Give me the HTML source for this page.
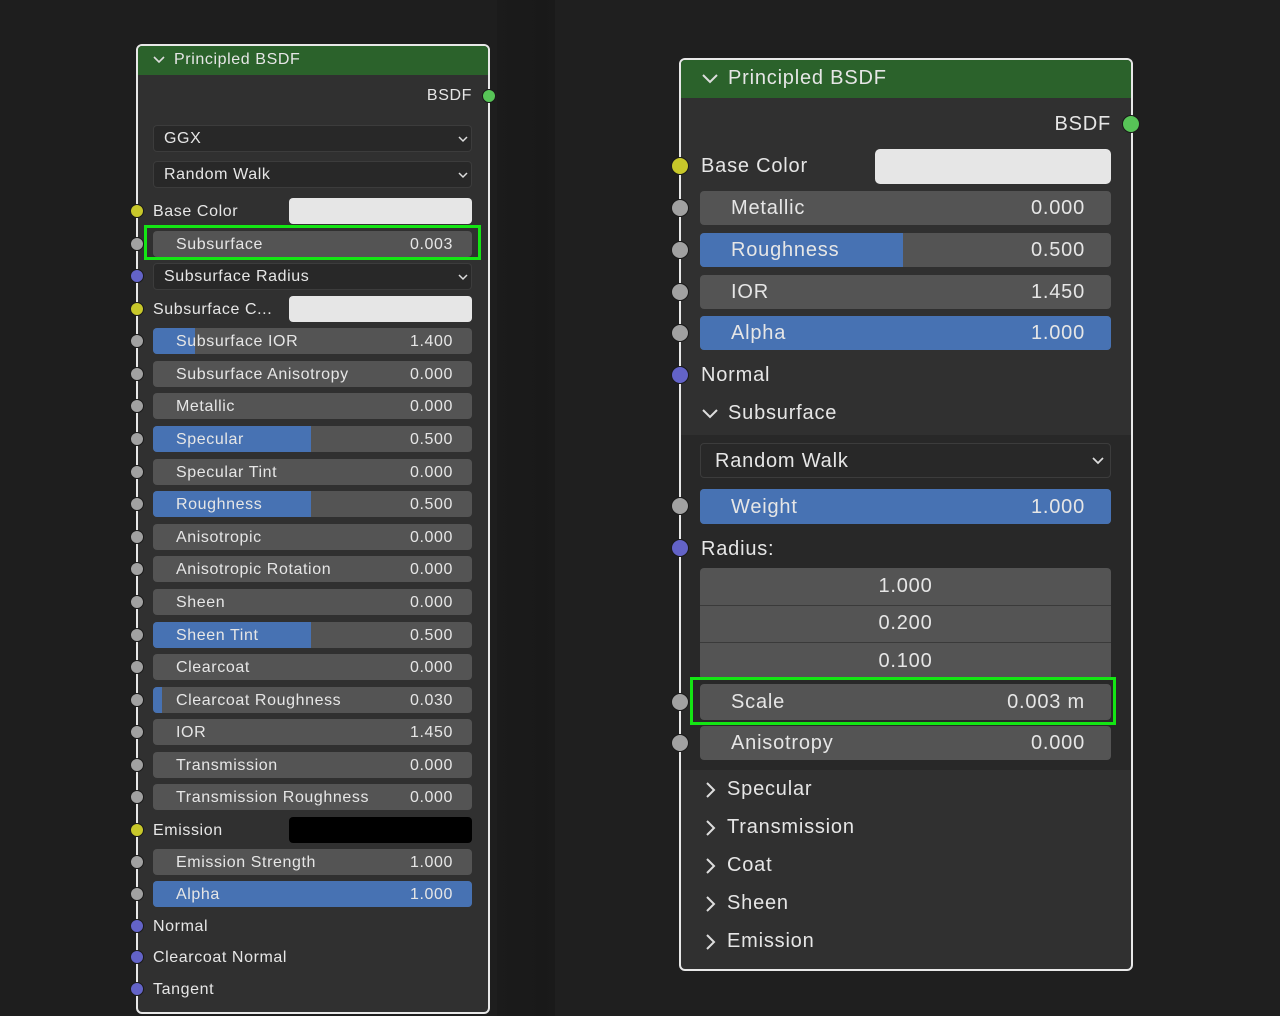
<!DOCTYPE html>
<html><head><meta charset="utf-8"><style>
*{box-sizing:border-box;margin:0;padding:0}
body{width:1280px;height:1016px;overflow:hidden;background:#1e1e1e;font-family:"Liberation Sans","DejaVu Sans",sans-serif;color:#e6e6e6;position:relative}
.a{position:absolute}
.node{position:absolute;background:#303030;border:2px solid #e8e8e8;border-radius:6px;overflow:hidden}
.hd{position:absolute;left:0;right:0;top:0;background:#2b622b}
.s{position:absolute;border-radius:50%;border:1.5px solid #1a1a1a}
.g{background:#a1a1a1}.y{background:#c7c72a}.p{background:#6363c7}.gr{background:#57c457}
.w{position:absolute;background:#545454;border-radius:4px;overflow:hidden}
.w .f{position:absolute;left:0;top:0;bottom:0;background:#4772b3}
.w .l,.w .v{position:absolute;top:1px;bottom:0;display:flex;align-items:center}
.dd{position:absolute;background:#282828;border:1px solid #3c3c3c;border-radius:4px}
.t{position:absolute;display:flex;align-items:center;padding-top:1px}
.hl{position:absolute;border:3px solid #14e614}
.L{letter-spacing:0.6px}
.R{letter-spacing:0.8px}
</style></head><body>
<div class="a" style="left:497px;top:0;width:58px;height:1016px;background:linear-gradient(90deg,#1b1b1b,#191919 80%,#1a1a1a)"></div>
<div class="a" style="left:555px;top:0;width:725px;height:1016px;background:#1f1f1f"></div>

<div class="L">
<!-- LEFT NODE -->
<div class="node" style="left:136px;top:44px;width:354px;height:970px;font-size:16px">
 <div class="hd" style="height:29px"></div>
</div>
<div class="t" style="left:152px;top:45px;height:28px;font-size:16px"><svg width="14" height="10" viewBox="0 0 14 10"><path d="M2 2l5 5 5-5" stroke="#ddd" stroke-width="1.6" fill="none"/></svg><span style="margin-left:8px">Principled BSDF</span></div>
<div class="t" style="left:400px;top:84px;height:22px;width:72px;justify-content:flex-end;font-size:16px">BSDF</div>
<div class="s gr" style="left:482px;top:89px;width:14px;height:14px"></div>

<div class="dd" style="left:153px;top:125px;width:319px;height:27px"></div>
<div class="t" style="left:164px;top:125px;height:27px;font-size:16px">GGX</div>
<div class="dd" style="left:153px;top:161px;width:319px;height:27px"></div>
<div class="t" style="left:164px;top:161px;height:27px;font-size:16px">Random Walk</div>
<div class="dd" style="left:153px;top:263px;width:319px;height:27px"></div>
<div class="t" style="left:164px;top:263px;height:27px;font-size:16px">Subsurface Radius</div>
<svg class="a" style="left:457px;top:134px" width="12" height="10"><path d="M2 3l4 4 4-4" stroke="#ddd" stroke-width="1.5" fill="none"/></svg>
<svg class="a" style="left:457px;top:170px" width="12" height="10"><path d="M2 3l4 4 4-4" stroke="#ddd" stroke-width="1.5" fill="none"/></svg>
<svg class="a" style="left:457px;top:272px" width="12" height="10"><path d="M2 3l4 4 4-4" stroke="#ddd" stroke-width="1.5" fill="none"/></svg>

<div class="t" style="left:153px;top:198px;height:26px;font-size:16px">Base Color</div>
<div class="a" style="left:289px;top:198px;width:183px;height:26px;background:#e6e6e6;border-radius:4px"></div>
<div class="t" style="left:153px;top:296px;height:26px;font-size:16px">Subsurface C...</div>
<div class="a" style="left:289px;top:296px;width:183px;height:26px;background:#e6e6e6;border-radius:4px"></div>
<div class="t" style="left:153px;top:817px;height:26px;font-size:16px">Emission</div>
<div class="a" style="left:289px;top:817px;width:183px;height:26px;background:#000;border-radius:4px"></div>
<div class="t" style="left:153px;top:913px;height:26px;font-size:16px">Normal</div>
<div class="t" style="left:153px;top:944px;height:26px;font-size:16px">Clearcoat Normal</div>
<div class="t" style="left:153px;top:976px;height:26px;font-size:16px">Tangent</div>

<div class="w" style="left:153px;top:231px;width:319px;height:26px;font-size:16px"><div class="l" style="left:23px">Subsurface</div><div class="v" style="right:19px">0.003</div></div>
<div class="w" style="left:153px;top:328px;width:319px;height:26px;font-size:16px"><div class="f" style="width:42px"></div><div class="l" style="left:23px">Subsurface IOR</div><div class="v" style="right:19px">1.400</div></div>
<div class="w" style="left:153px;top:361px;width:319px;height:26px;font-size:16px"><div class="l" style="left:23px">Subsurface Anisotropy</div><div class="v" style="right:19px">0.000</div></div>
<div class="w" style="left:153px;top:393px;width:319px;height:26px;font-size:16px"><div class="l" style="left:23px">Metallic</div><div class="v" style="right:19px">0.000</div></div>
<div class="w" style="left:153px;top:426px;width:319px;height:26px;font-size:16px"><div class="f" style="width:158px"></div><div class="l" style="left:23px">Specular</div><div class="v" style="right:19px">0.500</div></div>
<div class="w" style="left:153px;top:459px;width:319px;height:26px;font-size:16px"><div class="l" style="left:23px">Specular Tint</div><div class="v" style="right:19px">0.000</div></div>
<div class="w" style="left:153px;top:491px;width:319px;height:26px;font-size:16px"><div class="f" style="width:158px"></div><div class="l" style="left:23px">Roughness</div><div class="v" style="right:19px">0.500</div></div>
<div class="w" style="left:153px;top:524px;width:319px;height:26px;font-size:16px"><div class="l" style="left:23px">Anisotropic</div><div class="v" style="right:19px">0.000</div></div>
<div class="w" style="left:153px;top:556px;width:319px;height:26px;font-size:16px"><div class="l" style="left:23px">Anisotropic Rotation</div><div class="v" style="right:19px">0.000</div></div>
<div class="w" style="left:153px;top:589px;width:319px;height:26px;font-size:16px"><div class="l" style="left:23px">Sheen</div><div class="v" style="right:19px">0.000</div></div>
<div class="w" style="left:153px;top:622px;width:319px;height:26px;font-size:16px"><div class="f" style="width:158px"></div><div class="l" style="left:23px">Sheen Tint</div><div class="v" style="right:19px">0.500</div></div>
<div class="w" style="left:153px;top:654px;width:319px;height:26px;font-size:16px"><div class="l" style="left:23px">Clearcoat</div><div class="v" style="right:19px">0.000</div></div>
<div class="w" style="left:153px;top:687px;width:319px;height:26px;font-size:16px"><div class="f" style="width:9px"></div><div class="l" style="left:23px">Clearcoat Roughness</div><div class="v" style="right:19px">0.030</div></div>
<div class="w" style="left:153px;top:719px;width:319px;height:26px;font-size:16px"><div class="l" style="left:23px">IOR</div><div class="v" style="right:19px">1.450</div></div>
<div class="w" style="left:153px;top:752px;width:319px;height:26px;font-size:16px"><div class="l" style="left:23px">Transmission</div><div class="v" style="right:19px">0.000</div></div>
<div class="w" style="left:153px;top:784px;width:319px;height:26px;font-size:16px"><div class="l" style="left:23px">Transmission Roughness</div><div class="v" style="right:19px">0.000</div></div>
<div class="w" style="left:153px;top:849px;width:319px;height:26px;font-size:16px"><div class="l" style="left:23px">Emission Strength</div><div class="v" style="right:19px">1.000</div></div>
<div class="w" style="left:153px;top:881px;width:319px;height:26px;font-size:16px"><div class="f" style="width:319px"></div><div class="l" style="left:23px">Alpha</div><div class="v" style="right:19px">1.000</div></div>
<div class="hl" style="left:144px;top:225px;width:337px;height:35px"></div>
</div>

<div class="s y" style="left:130px;top:204px;width:14px;height:14px"></div>
<div class="s g" style="left:130px;top:237px;width:14px;height:14px"></div>
<div class="s p" style="left:130px;top:269px;width:14px;height:14px"></div>
<div class="s y" style="left:130px;top:302px;width:14px;height:14px"></div>
<div class="s g" style="left:130px;top:334px;width:14px;height:14px"></div>
<div class="s g" style="left:130px;top:367px;width:14px;height:14px"></div>
<div class="s g" style="left:130px;top:399px;width:14px;height:14px"></div>
<div class="s g" style="left:130px;top:432px;width:14px;height:14px"></div>
<div class="s g" style="left:130px;top:465px;width:14px;height:14px"></div>
<div class="s g" style="left:130px;top:497px;width:14px;height:14px"></div>
<div class="s g" style="left:130px;top:530px;width:14px;height:14px"></div>
<div class="s g" style="left:130px;top:562px;width:14px;height:14px"></div>
<div class="s g" style="left:130px;top:595px;width:14px;height:14px"></div>
<div class="s g" style="left:130px;top:628px;width:14px;height:14px"></div>
<div class="s g" style="left:130px;top:660px;width:14px;height:14px"></div>
<div class="s g" style="left:130px;top:693px;width:14px;height:14px"></div>
<div class="s g" style="left:130px;top:725px;width:14px;height:14px"></div>
<div class="s g" style="left:130px;top:758px;width:14px;height:14px"></div>
<div class="s g" style="left:130px;top:790px;width:14px;height:14px"></div>
<div class="s y" style="left:130px;top:823px;width:14px;height:14px"></div>
<div class="s g" style="left:130px;top:855px;width:14px;height:14px"></div>
<div class="s g" style="left:130px;top:887px;width:14px;height:14px"></div>
<div class="s p" style="left:130px;top:919px;width:14px;height:14px"></div>
<div class="s p" style="left:130px;top:950px;width:14px;height:14px"></div>
<div class="s p" style="left:130px;top:982px;width:14px;height:14px"></div>

<div class="R">
<!-- RIGHT NODE -->
<div class="node" style="left:679px;top:58px;width:454px;height:913px">
 <div class="hd" style="height:38px"></div>
 <div class="a" style="left:0;right:0;top:375px;height:335px;background:#282828"></div>
</div>
<div class="t" style="left:700px;top:59px;height:38px;font-size:20px"><svg width="20" height="14" viewBox="0 0 20 14"><path d="M3 3l7 7 7-7" stroke="#ddd" stroke-width="2" fill="none"/></svg><span style="margin-left:8px">Principled BSDF</span></div>
<div class="t" style="left:1000px;top:110px;height:28px;width:111px;justify-content:flex-end;font-size:20px">BSDF</div>
<div class="s gr" style="left:1122px;top:115px;width:18px;height:18px"></div>

<div class="t" style="left:701px;top:150px;height:32px;font-size:20px">Base Color</div>
<div class="a" style="left:875px;top:149px;width:236px;height:35px;background:#e6e6e6;border-radius:5px"></div>

<div class="w" style="left:700px;top:191px;width:411px;height:34px;font-size:20px"><div class="l" style="left:31px">Metallic</div><div class="v" style="right:26px">0.000</div></div>
<div class="w" style="left:700px;top:233px;width:411px;height:34px;font-size:20px"><div class="f" style="width:203px"></div><div class="l" style="left:31px">Roughness</div><div class="v" style="right:26px">0.500</div></div>
<div class="w" style="left:700px;top:275px;width:411px;height:34px;font-size:20px"><div class="l" style="left:31px">IOR</div><div class="v" style="right:26px">1.450</div></div>
<div class="w" style="left:700px;top:316px;width:411px;height:34px;font-size:20px"><div class="f" style="width:411px"></div><div class="l" style="left:31px">Alpha</div><div class="v" style="right:26px">1.000</div></div>
<div class="t" style="left:701px;top:360px;height:30px;font-size:20px">Normal</div>
<div class="t" style="left:700px;top:398px;height:30px;font-size:20px"><svg width="20" height="14" viewBox="0 0 20 14"><path d="M3 3l7 7 7-7" stroke="#ddd" stroke-width="2" fill="none"/></svg><span style="margin-left:8px">Subsurface</span></div>

<div class="dd" style="left:700px;top:443px;width:411px;height:35px"></div>
<div class="t" style="left:715px;top:443px;height:35px;font-size:20px">Random Walk</div>
<svg class="a" style="left:1091px;top:455px" width="14" height="12"><path d="M2 3l5 5 5-5" stroke="#ddd" stroke-width="1.7" fill="none"/></svg>
<div class="w" style="left:700px;top:489px;width:411px;height:35px;font-size:20px"><div class="f" style="width:411px"></div><div class="l" style="left:31px">Weight</div><div class="v" style="right:26px">1.000</div></div>
<div class="t" style="left:701px;top:534px;height:30px;font-size:20px">Radius:</div>
<div class="w" style="left:700px;top:568px;width:411px;height:112px;font-size:20px">
 <div class="l" style="left:0;right:0;top:0;height:37px;justify-content:center">1.000</div>
 <div class="a" style="left:0;right:0;top:37px;height:1px;background:#3a3a3a"></div>
 <div class="l" style="left:0;right:0;top:37px;height:37px;justify-content:center">0.200</div>
 <div class="a" style="left:0;right:0;top:74px;height:1px;background:#3a3a3a"></div>
 <div class="l" style="left:0;right:0;top:74px;height:38px;justify-content:center">0.100</div>
</div>
<div class="w" style="left:700px;top:684px;width:411px;height:36px;font-size:20px"><div class="l" style="left:31px">Scale</div><div class="v" style="right:26px">0.003 m</div></div>
<div class="w" style="left:700px;top:726px;width:411px;height:34px;font-size:20px"><div class="l" style="left:31px">Anisotropy</div><div class="v" style="right:26px">0.000</div></div>
<div class="hl" style="left:690px;top:677px;width:426px;height:48px"></div>

<div class="t" style="left:703px;top:774px;height:30px;font-size:20px"><svg width="16" height="20" viewBox="0 0 16 20"><path d="M4 3l7 7-7 7" stroke="#ddd" stroke-width="2" fill="none"/></svg><span style="margin-left:8px">Specular</span></div>
<div class="t" style="left:703px;top:812px;height:30px;font-size:20px"><svg width="16" height="20" viewBox="0 0 16 20"><path d="M4 3l7 7-7 7" stroke="#ddd" stroke-width="2" fill="none"/></svg><span style="margin-left:8px">Transmission</span></div>
<div class="t" style="left:703px;top:850px;height:30px;font-size:20px"><svg width="16" height="20" viewBox="0 0 16 20"><path d="M4 3l7 7-7 7" stroke="#ddd" stroke-width="2" fill="none"/></svg><span style="margin-left:8px">Coat</span></div>
<div class="t" style="left:703px;top:888px;height:30px;font-size:20px"><svg width="16" height="20" viewBox="0 0 16 20"><path d="M4 3l7 7-7 7" stroke="#ddd" stroke-width="2" fill="none"/></svg><span style="margin-left:8px">Sheen</span></div>
<div class="t" style="left:703px;top:926px;height:30px;font-size:20px"><svg width="16" height="20" viewBox="0 0 16 20"><path d="M4 3l7 7-7 7" stroke="#ddd" stroke-width="2" fill="none"/></svg><span style="margin-left:8px">Emission</span></div>
</div>

<div class="s y" style="left:671px;top:157px;width:18px;height:18px"></div>
<div class="s g" style="left:671px;top:199px;width:18px;height:18px"></div>
<div class="s g" style="left:671px;top:241px;width:18px;height:18px"></div>
<div class="s g" style="left:671px;top:283px;width:18px;height:18px"></div>
<div class="s g" style="left:671px;top:324px;width:18px;height:18px"></div>
<div class="s p" style="left:671px;top:366px;width:18px;height:18px"></div>
<div class="s g" style="left:671px;top:497px;width:18px;height:18px"></div>
<div class="s p" style="left:671px;top:539px;width:18px;height:18px"></div>
<div class="s g" style="left:671px;top:693px;width:18px;height:18px"></div>
<div class="s g" style="left:671px;top:734px;width:18px;height:18px"></div>
</body></html>
